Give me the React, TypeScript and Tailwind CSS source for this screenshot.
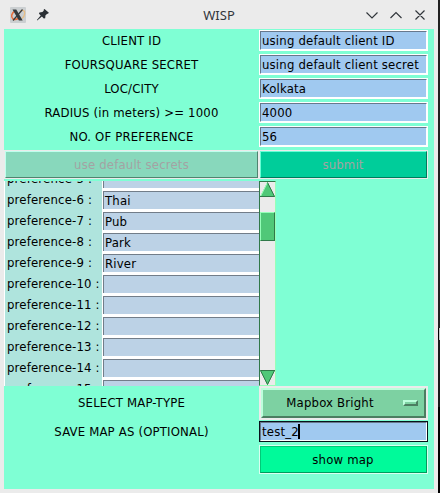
import React from "react";

const fields = [
  { label: "CLIENT ID", value: "using default client ID" },
  { label: "FOURSQUARE SECRET", value: "using default client secret" },
  { label: "LOC/CITY", value: "Kolkata" },
  { label: "RADIUS (in meters) >= 1000", value: "4000" },
  { label: "NO. OF PREFERENCE", value: "56" },
];

const preferences = [
  { n: 5, value: "" },
  { n: 6, value: "Thai" },
  { n: 7, value: "Pub" },
  { n: 8, value: "Park" },
  { n: 9, value: "River" },
  { n: 10, value: "" },
  { n: 11, value: "" },
  { n: 12, value: "" },
  { n: 13, value: "" },
  { n: 14, value: "" },
  { n: 15, value: "" },
];

function TitleBar() {
  return (
    <header className="flex h-[29px] items-center bg-[#ebebeb] pl-[9px] text-[#31363b]">
      <svg width="18" height="18" viewBox="0 0 18 18" className="shrink-0">
        <rect x="1" y="1" width="16" height="16" rx="1" fill="#cbcfd1" />
        <path d="M6 5C2.5 7 1.5 11 4 13c1.8 1 4 .2 6-1" fill="none" stroke="#e66b3a" strokeWidth="1.5" />
        <path d="M11 5c3-1.5 5-.5 4.7 2.5-.2 2-1.2 4-2.7 5" fill="none" stroke="#e8bd84" strokeWidth="1.3" />
        <path d="M3.5 3.5h3.8l6.4 11H9.9z" fill="#34383b" />
        <path d="M13.5 3.5L4 14.5" stroke="#34383b" strokeWidth="1.2" />
      </svg>
      <svg width="14" height="14" viewBox="0 0 14 14" className="ml-[9px] shrink-0">
        <path d="M8.2 1.3L12.2 5.2 11 6 9.5 7.3 9.2 10.2 7.8 10.5 5.9 8.6 1.2 12.4.9 12.1 4.7 7.4 3 5.7 3.4 4.4 6.4 4.1 7.7 2.7z" fill="#2b3035" />
        <path d="M8 1.5l4.4 3.8" stroke="#2b3035" strokeWidth="1.5" />
      </svg>
      <h1 className="ml-[153px] w-[32px] text-center font-['Noto_Sans'] text-[13px] leading-[18px] tracking-normal whitespace-nowrap">WISP</h1>
      <svg width="62" height="14" viewBox="0 0 62 14" className="ml-[130px] shrink-0" fill="none" stroke="#31363b" strokeWidth="1.15">
        <path d="M1.5 4.5l5.5 5.5 5.5-5.5M25.5 10L31 4.500l5.500 5.500M50.500 2.500l9 9M59.500 2.500l-9 9" />
      </svg>
    </header>
  );
}

function Entry({ value }: { value: string }) {
  return (
    <div className="h-[21px] w-[169px] shrink-0 border border-white">
      <div className="h-full border border-t-[#68788c] border-r-white border-b-white border-l-[#68788c] bg-[#a0c9f0] pl-px leading-[18px] whitespace-nowrap">
        {value}
      </div>
    </div>
  );
}

function ScrollBar() {
  return (
    <div className="flex w-[17px] shrink-0 flex-col border border-t-[#307849] border-r-[#96ffb8] border-b-[#96ffb8] border-l-[#307849] bg-[#ebebeb]">
      <svg width="15" height="15" viewBox="0 0 15 15" className="shrink-0">
        <path d="M7.500 0L15 15H0z" fill="#50c878" />
        <path d="M7.500 .5L.5 14.500" stroke="#96ffb8" />
        <path d="M7.500 .5l7 14H0" fill="none" stroke="#307849" />
      </svg>
      <div className="mt-[15px] h-[29px] w-[15px] border border-t-[#96ffb8] border-r-[#307849] border-b-[#307849] border-l-[#96ffb8] bg-[#50c878]" />
      <svg width="15" height="15" viewBox="0 0 15 15" className="mt-auto shrink-0">
        <path d="M0 0h15L7.500 15z" fill="#50c878" />
        <path d="M15 .5H.5l7 14" fill="none" stroke="#307849" />
        <path d="M14.500 .5l-7 14" stroke="#307849" />
      </svg>
    </div>
  );
}

function PreferenceList() {
  return (
    <section className="mt-[2px] flex h-[205px] overflow-hidden">
      <div className="w-[255px] shrink-0 overflow-hidden">
        <div className="-mt-[13px]">
          {preferences.map((p) => (
            <div key={p.n} className="flex h-[21px]">
              <div className="w-[98px] shrink-0 border-l border-white bg-[#afe4dd] pl-[2px] leading-[22px] whitespace-nowrap">
                {`preference-${p.n} :`}
              </div>
              <div className="grow border-t-2 border-b border-l border-white">
                <div className="h-full border-t border-l border-[#727d89] bg-[#bcd2e6] pl-px leading-[18px]">{p.value}</div>
              </div>
            </div>
          ))}
        </div>
      </div>
      <ScrollBar />
    </section>
  );
}

export default function App() {
  return (
    <div className="flex h-[493px] w-[440px] overflow-hidden bg-[#ebebeb] font-['DejaVu_Sans_Condensed','DejaVu_Sans',sans-serif] text-[13px] tracking-[0.18px] text-black">
      <div className="w-[438px] shrink-0">
        <TitleBar />
        <main className="ml-[4px] h-[460px] w-[430px] bg-[#7fffd4] pt-px">
          <div className="flex h-[120px] flex-col gap-[3px]">
            {fields.map((f) => (
              <div key={f.label} className="flex h-[21px]">
                <div className="w-[255px] text-center leading-[22px]">{f.label}</div>
                <Entry value={f.value} />
              </div>
            ))}
          </div>
          <div className="flex h-[29px]">
            <button className="h-[29px] w-[255px] border border-[#ebebeb]">
              <span className="block h-full border border-t-[#bfffed] border-r-[#51836f] border-b-[#51836f] border-l-[#bfffed] bg-[#88d8bc] leading-[25px] text-[#a3a3a3]">use default secrets</span>
            </button>
            <button className="h-[29px] w-[169px] border border-[#ebebeb]">
              <span className="block h-full border border-t-[#66ffd5] border-r-[#007b5c] border-b-[#007b5c] border-l-[#66ffd5] bg-[#00cd9a] pr-px leading-[25px] text-[#a3a3a3]">submit</span>
            </button>
          </div>
          <PreferenceList />
          <div className="flex h-[34px]">
            <div className="w-[255px] text-center leading-[34px]">SELECT MAP-TYPE</div>
            <button className="w-[169px] border-2 border-[#ebebeb]">
              <span className="flex h-full items-center border-2 border-t-[#bcffdc] border-r-[#4b7d61] border-b-[#4b7d61] border-l-[#bcffdc] bg-[#7dd1a2]">
                <span className="w-[134px] text-center">Mapbox Bright</span>
                <span className="ml-[6px] h-[6px] w-[15px] border-2 border-t-[#bcffdc] border-r-[#4b7d61] border-b-[#4b7d61] border-l-[#bcffdc] bg-[#7dd1a2]" />
              </span>
            </button>
          </div>
          <div className="mt-px flex h-[21px]">
            <div className="w-[255px] text-center leading-[22px]">SAVE MAP AS (OPTIONAL)</div>
            <div className="w-[169px] border border-[#07121b]">
              <div className="flex h-full border border-t-[#68788c] border-r-white border-b-white border-l-[#68788c] bg-[#a0c9f0] pl-px leading-[18px]">
                test_2
                <span className="-ml-px mt-px h-[15px] w-[2px] bg-black" />
              </div>
            </div>
          </div>
          <button className="mt-[3px] ml-[255px] block h-[29px] w-[169px] border border-[#d9fff0]">
            <span className="block h-full border border-t-[#00c978] border-r-[#009b5d] border-b-[#009b5d] border-l-[#00c978] bg-[#00fa9a] pr-px leading-[25px]">show map</span>
          </button>
        </main>
      </div>
      <aside className="flex w-[2px] flex-col bg-black">
        <div className="h-[328px] bg-[#202020]" />
        <div className="ml-px h-[12px] bg-[#c8c8c8]" />
        <div className="h-[67px] bg-[#181a1b]" />
      </aside>
    </div>
  );
}
